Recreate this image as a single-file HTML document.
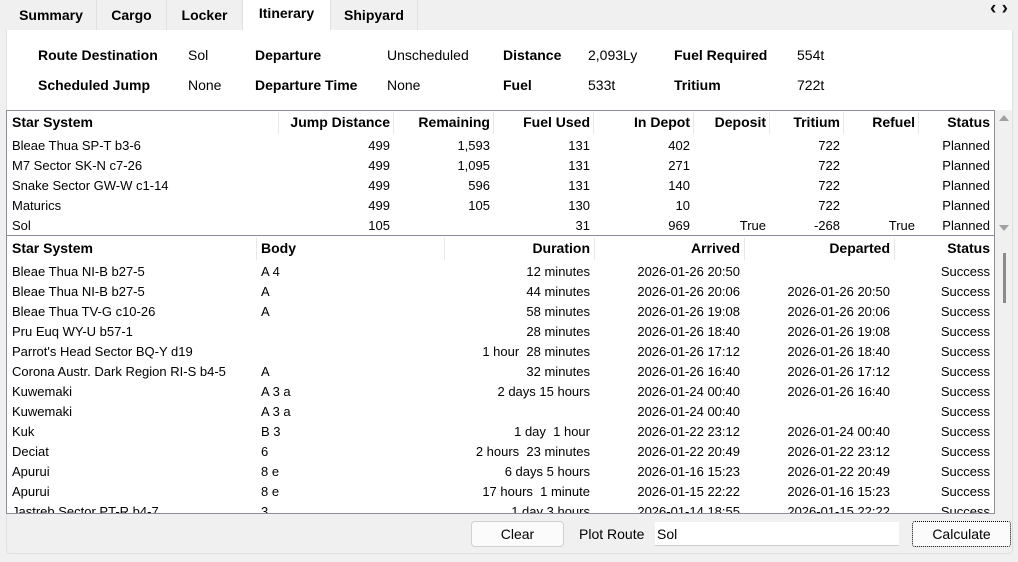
<!DOCTYPE html>
<html><head><meta charset="utf-8"><style>
*{margin:0;padding:0;box-sizing:border-box}
body{width:1018px;height:562px;background:#f0f0f0;font-family:"Liberation Sans",sans-serif;font-size:13px;color:#000;position:relative;overflow:hidden}
.a{position:absolute;white-space:pre}
.tab{position:absolute;top:0;height:30px;background:#f0f0f0;border-right:1px solid #e0e0e0;font-weight:bold;font-size:14px;text-align:center;line-height:31px}
.b{font-weight:bold;font-size:14px}
.v{font-size:14px}
.h{font-weight:bold;font-size:14px}
.sep{position:absolute;width:1px;background:#e8e8e8}
</style></head><body>
<div class="tab" style="left:6px;width:91px">Summary</div>
<div class="tab" style="left:97px;width:70px">Cargo</div>
<div class="tab" style="left:167px;width:76px">Locker</div>
<div class="tab" style="left:243px;width:88px;background:#fff;line-height:27px;height:31px">Itinerary</div>
<div class="tab" style="left:331px;width:87px">Shipyard</div>
<div class="a" style="left:990px;top:-2px;font-size:19px;font-weight:bold;color:#111">‹ ›</div>
<div class="a" style="left:6px;top:30px;width:1007px;height:524px;background:#f0f0f0;border:1px solid #e0e0e0;border-radius:0 0 4px 4px"></div>
<div class="a" style="left:7px;top:30px;width:1005px;height:81px;background:#fff"></div>
<div class="a b" style="left:38px;top:47px">Route Destination</div>
<div class="a v" style="left:188px;top:47px">Sol</div>
<div class="a b" style="left:255px;top:47px">Departure</div>
<div class="a v" style="left:387px;top:47px">Unscheduled</div>
<div class="a b" style="left:503px;top:47px">Distance</div>
<div class="a v" style="left:588px;top:47px">2,093Ly</div>
<div class="a b" style="left:674px;top:47px">Fuel Required</div>
<div class="a v" style="left:797px;top:47px">554t</div>
<div class="a b" style="left:38px;top:77px">Scheduled Jump</div>
<div class="a v" style="left:188px;top:77px">None</div>
<div class="a b" style="left:255px;top:77px">Departure Time</div>
<div class="a v" style="left:387px;top:77px">None</div>
<div class="a b" style="left:503px;top:77px">Fuel</div>
<div class="a v" style="left:588px;top:77px">533t</div>
<div class="a b" style="left:674px;top:77px">Tritium</div>
<div class="a v" style="left:797px;top:77px">722t</div>

<div class="a" style="left:6px;top:110px;width:989px;height:127px;background:#fff;border:1px solid #8a8f99;border-bottom:2px solid #8a8f99"></div>
<div class="a" style="left:995px;top:110px;width:17px;height:403px;background:#f0f0f0"></div>
<div class="a" style="left:999px;top:115px;width:0;height:0;border-left:5px solid transparent;border-right:5px solid transparent;border-bottom:6px solid #a0a0a0"></div>
<div class="a" style="left:999px;top:225px;width:0;height:0;border-left:5px solid transparent;border-right:5px solid transparent;border-top:6px solid #a0a0a0"></div>
<div class="a" style="left:1003px;top:253px;width:3px;height:50px;background:#8a8a8a"></div>
<div class="a" style="left:6px;top:236px;width:989px;height:278px;background:#fff;border:1px solid #8a8f99;border-top:none;overflow:hidden" id="t2"></div>

<div class="a" style="left:471px;top:521px;width:93px;height:26px;border:1px solid #d0d0d0;border-radius:4px;background:#fbfbfb;text-align:center;line-height:24px;font-size:14px">Clear</div>
<div class="a v" style="left:579px;top:526px">Plot Route</div>
<div class="a" style="left:655px;top:522px;width:244px;height:24px;background:#fff;border-bottom:1px solid #ccc;font-size:14px;line-height:24px;padding-left:2px">Sol</div>
<div class="a" style="left:912px;top:521px;width:99px;height:26px;border:1px dotted #000;border-radius:3px;background:#fbfbfb;text-align:center;line-height:24px;font-size:14px">Calculate</div>
<script>
function cell(p,x,y,w,t,cls){var d=document.createElement('div');d.className='a '+(cls||'');d.style.left=x+'px';d.style.top=y+'px';if(w){d.style.width=w+'px';d.style.textAlign='right'}d.textContent=t;p.appendChild(d)}
var b=document.body;
var c1=[[12,'Star System',0],[390,'Jump Distance',1],[490,'Remaining',1],[590,'Fuel Used',1],[690,'In Depot',1],[766,'Deposit',1],[840,'Tritium',1],[915,'Refuel',1],[990,'Status',1]];
var d1=[['Bleae Thua SP-T b3-6','499','1,593','131','402','','722','','Planned'],
['M7 Sector SK-N c7-26','499','1,095','131','271','','722','','Planned'],
['Snake Sector GW-W c1-14','499','596','131','140','','722','','Planned'],
['Maturics','499','105','130','10','','722','','Planned'],
['Sol','105','','31','969','True','-268','True','Planned']];
[278,393,493,593,693,769,843,918].forEach(function(x){var s=document.createElement('div');s.className='sep';s.style.left=x+'px';s.style.top='112px';s.style.height='22px';b.appendChild(s)});
c1.forEach(function(c,i){if(c[2])cell(b,c[0]-120,114,120,c[1],'h');else cell(b,c[0],114,0,c[1],'h');
 d1.forEach(function(r,j){if(c[2])cell(b,c[0]-120,138+20*j,120,r[i]);else cell(b,c[0],138+20*j,0,r[i])})});
var c2=[[12,'Star System',0],[261,'Body',0],[590,'Duration',1],[740,'Arrived',1],[890,'Departed',1],[990,'Status',1]];
var d2=[['Bleae Thua NI-B b27-5','A 4','12 minutes','2026-01-26 20:50',''],
['Bleae Thua NI-B b27-5','A','44 minutes','2026-01-26 20:06','2026-01-26 20:50'],
['Bleae Thua TV-G c10-26','A','58 minutes','2026-01-26 19:08','2026-01-26 20:06'],
['Pru Euq WY-U b57-1','','28 minutes','2026-01-26 18:40','2026-01-26 19:08'],
["Parrot's Head Sector BQ-Y d19",'','1 hour  28 minutes','2026-01-26 17:12','2026-01-26 18:40'],
['Corona Austr. Dark Region RI-S b4-5','A','32 minutes','2026-01-26 16:40','2026-01-26 17:12'],
['Kuwemaki','A 3 a','2 days 15 hours','2026-01-24 00:40','2026-01-26 16:40'],
['Kuwemaki','A 3 a','','2026-01-24 00:40',''],
['Kuk','B 3','1 day  1 hour','2026-01-22 23:12','2026-01-24 00:40'],
['Deciat','6','2 hours  23 minutes','2026-01-22 20:49','2026-01-22 23:12'],
['Apurui','8 e','6 days 5 hours','2026-01-16 15:23','2026-01-22 20:49'],
['Apurui','8 e','17 hours  1 minute','2026-01-15 22:22','2026-01-16 15:23'],
['Jastreb Sector PT-R b4-7','3','1 day 3 hours','2026-01-14 18:55','2026-01-15 22:22']];
var t2=document.getElementById('t2');
[249,437,587,737,887].forEach(function(x){var s=document.createElement('div');s.className='sep';s.style.left=x+'px';s.style.top='2px';s.style.height='22px';t2.appendChild(s)});
c2.forEach(function(c,i){var x=c[0]-7;if(c[2])cell(t2,x-200,4,200,c[1],'h');else cell(t2,x,4,0,c[1],'h');
 d2.forEach(function(r,j){var v=i==5?'Success':r[i];if(c[2])cell(t2,x-200,28+20*j,200,v);else cell(t2,x,28+20*j,0,v)})});
</script>
</body></html>
